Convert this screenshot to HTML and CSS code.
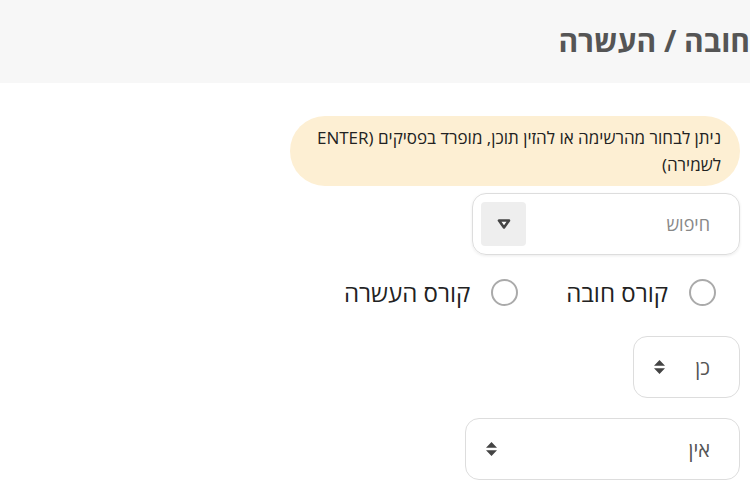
FILE: index.html
```html
<!DOCTYPE html>
<html lang="he" dir="rtl">
<head>
<meta charset="utf-8">
<link rel="stylesheet" href="styles.css">
</head>
<body>
<header class="page-header">
  <h1 class="page-title">חובה / העשרה</h1>
</header>
<main class="content">
  <div class="hint">ניתן לבחור מהרשימה או להזין תוכן, מופרד בפסיקים (ENTER לשמירה)</div>
  <div class="search-box">
    <span class="search-placeholder">חיפוש</span>
    <span class="search-toggle">
      <svg width="14" height="10" viewBox="0 0 14 10"><path d="M2 1.5 H12 L7 8.5 Z" fill="#fff" stroke="#444" stroke-width="2.6" stroke-linejoin="round"/></svg>
    </span>
  </div>
  <div class="radio-row">
    <label class="radio"><span class="radio-circle"></span><span class="radio-label">קורס חובה</span></label>
    <label class="radio"><span class="radio-circle"></span><span class="radio-label">קורס העשרה</span></label>
  </div>
  <div class="select select-short">
    <span class="select-value">כן</span>
    <svg class="sort-icon" width="11" height="16" viewBox="0 0 11 16"><path d="M5.5 1 L11 6.8 H0 Z M5.5 15 L11 9.2 H0 Z" fill="#444"/></svg>
  </div>
  <div class="select select-long">
    <span class="select-value">אין</span>
    <svg class="sort-icon" width="11" height="16" viewBox="0 0 11 16"><path d="M5.5 1 L11 6.8 H0 Z M5.5 15 L11 9.2 H0 Z" fill="#444"/></svg>
  </div>
</main>
</body>
</html>
```
FILE: styles.css
```css
html, body {
  margin: 0;
  padding: 0;
  background: #fff;
  font-family: "Open Sans", "DejaVu Sans", sans-serif;
  direction: rtl;
  overflow: hidden;
}
.page-header {
  height: 83px;
  background: #f7f7f7;
  display: flex;
  align-items: center;
  overflow: hidden;
}
.page-title {
  margin: 0;
  font-size: 30px;
  font-weight: 700;
  color: #555;
  white-space: nowrap;
  line-height: 1;
  padding-bottom: 2px;
}
.content {
  padding: 33px 10px 0 0;
  display: flex;
  flex-direction: column;
  align-items: flex-start;
}
.hint {
  width: 450px;
  box-sizing: border-box;
  background: #fdefd3;
  border-radius: 35px;
  padding: 8px 19px 8px 20px;
  font-size: 17px;
  line-height: 27px;
  color: #222;
}
.search-box {
  margin-top: 7px;
  width: 268px;
  height: 62px;
  box-sizing: border-box;
  border: 1px solid #ddd;
  border-radius: 14px;
  box-shadow: 0 1px 3px rgba(0,0,0,0.08);
  display: flex;
  align-items: center;
  justify-content: space-between;
  padding: 0 29px 0 8px;
}
.search-placeholder {
  font-size: 18px;
  color: #888;
}
.search-toggle {
  width: 45px;
  height: 44px;
  background: #eee;
  border-radius: 4px;
  display: flex;
  align-items: center;
  justify-content: center;
}
.radio-row {
  display: flex;
  gap: 48px;
  margin-top: 18px;
  padding-right: 24px;
  height: 38px;
  align-items: center;
}
.radio {
  display: flex;
  align-items: center;
  gap: 21px;
}
.radio-circle {
  width: 23px;
  height: 23px;
  border: 2.5px solid #aaa;
  border-radius: 50%;
}
.radio-label {
  font-size: 24px;
  color: #222;
}
.select {
  height: 62px;
  box-sizing: border-box;
  border: 1px solid #ddd;
  border-radius: 14px;
  display: flex;
  align-items: center;
  justify-content: space-between;
  padding: 0 29px 0 20px;
}
.select-short {
  margin-top: 25px;
  width: 107px;
}
.select-long {
  margin-top: 20px;
  width: 275px;
}
.select-value {
  font-size: 20px;
  color: #555;
}
.sort-icon {
  display: block;
}
```
